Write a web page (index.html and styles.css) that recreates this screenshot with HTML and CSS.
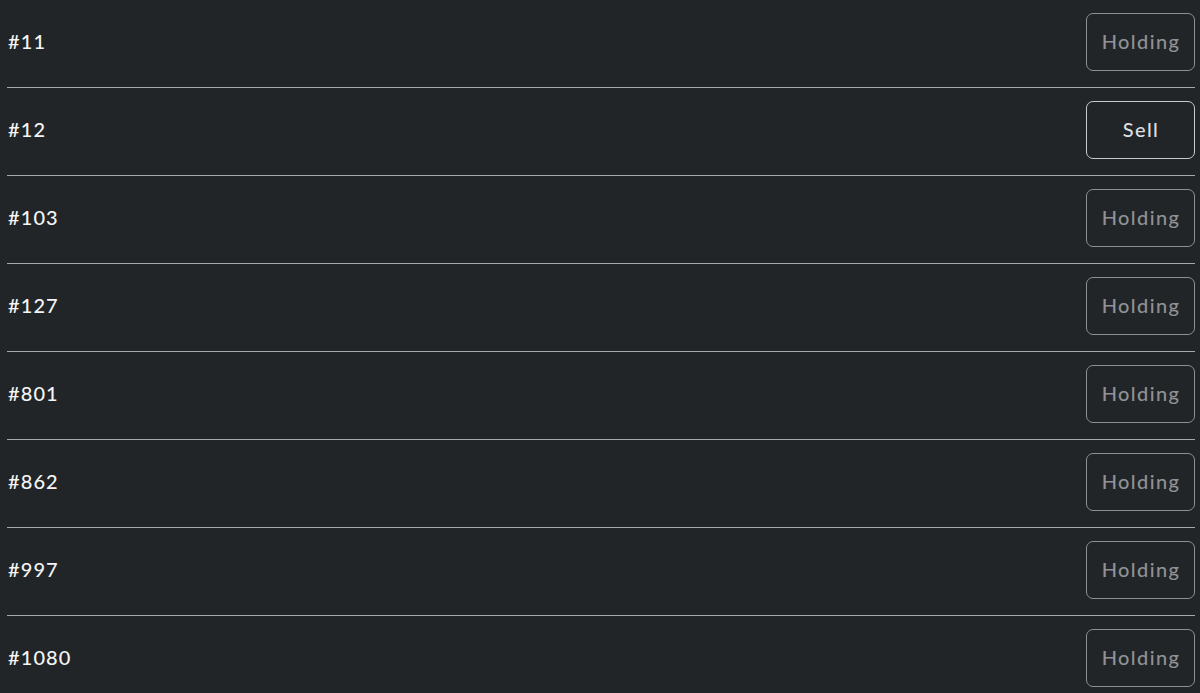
FILE: index.html
```html
<!DOCTYPE html>
<html>
<head>
<meta charset="utf-8">
<link rel="stylesheet" href="styles.css">
</head>
<body>
<ul class="list">
  <li class="row"><span class="id">#11</span><button class="btn">Holding</button></li>
  <li class="row"><span class="id">#12</span><button class="btn sell">Sell</button></li>
  <li class="row"><span class="id">#103</span><button class="btn">Holding</button></li>
  <li class="row"><span class="id">#127</span><button class="btn">Holding</button></li>
  <li class="row"><span class="id">#801</span><button class="btn">Holding</button></li>
  <li class="row"><span class="id">#862</span><button class="btn">Holding</button></li>
  <li class="row"><span class="id">#997</span><button class="btn">Holding</button></li>
  <li class="row"><span class="id">#1080</span><button class="btn">Holding</button></li>
</ul>
</body>
</html>
```
FILE: styles.css
```css
html, body {
  margin: 0;
  padding: 0;
  background: #222528;
  height: 100%;
  overflow: hidden;
}
body {
  font-family: "Lato", "Noto Sans", sans-serif;
}
.list {
  list-style: none;
  margin: 0 5px 0 7px;
  padding: 0;
}
.row {
  display: flex;
  align-items: center;
  justify-content: space-between;
  height: 87px;
  border-bottom: 1px solid #a6a8aa;
  padding-left: 1px;
}
.id {
  color: #f4f4f4;
  font-size: 20px;
  font-weight: 500;
  letter-spacing: 1.1px;
  margin-top: -6px;
}
.btn {
  width: 109px;
  height: 58px;
  background: transparent;
  border: 1px solid #8e9194;
  border-radius: 7px;
  color: #8f9295;
  font-family: "Lato", "Noto Sans", sans-serif;
  font-size: 20px;
  font-weight: 500;
  letter-spacing: 1.4px;
  padding: 0 0 2px 1px;
  margin-top: -3px;
}
.btn.sell {
  color: #dedfe0;
  border-color: #c8c9ca;
}
```
